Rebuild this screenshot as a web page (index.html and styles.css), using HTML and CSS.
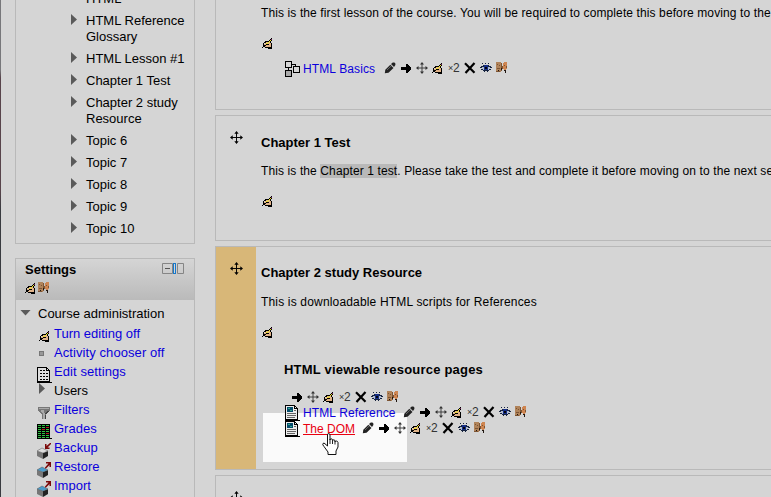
FILE: index.html
```html
<!DOCTYPE html>
<html lang="en">
<head>
<meta charset="utf-8">
<title>Course</title>
<link rel="stylesheet" href="styles.css">
</head>
<body>
<svg class="sprites" aria-hidden="true">
  <symbol id="hand" viewBox="0 0 11 11">
    <path fill="#e0b389" d="M3 4h5v1h1v4H3V8H2V6h1z"/>
    <path fill="#000" d="M9 0h1v1H9zM8 1h1v1H8zM7 2h1v1H7zM3 3h4v1H3zM2 4h2v1H2zM1 5h1v2H1zM1 7h3v1H1zM0 9h1v1H0zM1 8h2v1H1zM3 9h6v1H3zM6 10h4v1H6zM9 5h1v5H9zM8 4h1v1H8zM9 2h1v1H9zM8 3h1v1H8zM4 6h3v1H4z"/>
    <path fill="#eee32a" d="M8 2h1v1H8zM7 3h1v1H7zM6 4h1v1H6zM5 5h1v1H5zM4 5h1v1H4z"/>
    <path fill="#78285f" d="M9 1h1v1H9z"/>
  </symbol>
  <symbol id="mask" viewBox="0 0 12 12">
    <path fill="#b0835a" d="M0 0h5v10H0z"/><path fill="#ce8551" d="M8 0h3v1H8zM7 1h4v6H7zM8 7h2v1H8z"/>
    <path fill="#7c5433" d="M5 1h1v8H5zM0 9h4v1H0zM1 2h1v1H1zM3 3h1v1H3zM1 6h3v1H1zM6 4h1v3H6zM8 3h1v1H8zM10 4h1v2H10z"/>
    <path fill="#201610" d="M2 8h1v1H2zM5 6h1v2H5zM8 8h2v1H8zM9 9h1v2H9z"/>
  </symbol>
  <symbol id="pencil" viewBox="0 0 12 12">
    <path fill="#222" d="M.800 11.200L1.300 7.700 6.300 2.700l3.200 3.200-5 4.800z"/><path fill="#222" d="M7 2l1.800-1.500h1.600l1 1v1.600L10 5z"/><path stroke="#888" stroke-width=".7" d="M3 8l4.500-4.300"/>
  </symbol>
  <symbol id="arrow" viewBox="0 0 12 12"><path d="M1 5h5V2h1l4 4v1l-4 4H6V8H1z"/></symbol>
  <symbol id="move" viewBox="0 0 12 12">
    <path fill="none" stroke="currentColor" stroke-width=".9" d="M6 1v10M1 6h10"/>
    <path fill="currentColor" d="M6 0l2 2.500H4zM6 12l2-2.500H4zM0 6l2.500-2v4zM12 6L9.500 4v4z"/>
  </symbol>
  <symbol id="cross" viewBox="0 0 12 12"><path fill="none" stroke="#000" stroke-width="2.200" d="M1 1.200l9.500 9.600M10.500 1L1.500 11"/></symbol>
  <symbol id="eye" viewBox="0 0 12 12">
    <path fill="#aebbd2" d="M2 5h8v3H2z"/>
    <path fill="#16233f" d="M3 3h6v1H3zM1 4h3v1H1zM8 4h3v1H8zM0 5h2v1H0zM10 5h2v1h-2zM1 7h2v1H1zM9 7h2v1H9zM3 8h6v1H3zM2 1h1v1H2zM5 1h1v1H5zM8 1h1v1H8zM4 9h1v1H4zM7 9h1v1H7z"/>
    <path fill="#152d85" d="M4 3h4v5H4z"/><path fill="#03050e" d="M5 5h2v2H5z"/>
  </symbol>
  <symbol id="page" viewBox="0 0 15 16">
    <path fill="#eee" stroke="#000" d="M.5.500h9l3 3v11H.500z"/><path fill="none" stroke="#000" d="M9.500 0v3.500H13M0 15h15"/>
    <path fill="#064c6c" d="M2 2h6v5H2z"/><path fill="#35a98d" d="M3 3h2v1H3zM5 5h2v1H5z"/>
    <path fill="#666" d="M9 5h2v1H9zM2 8h9v1H2zM2 10h9v1H2zM2 12h8v1H2z"/>
  </symbol>
  <symbol id="lesson" viewBox="0 0 15 16">
    <path fill="none" stroke="#000" d="M.5.500h6v6h-6zM8.500 5.500h6v6h-6zM3.500 6v4M6 3.500h4.500V6"/><path fill="#aaa" stroke="#000" d="M.5 9.500h6v6h-6z"/>
  </symbol>
  <symbol id="doc" viewBox="0 0 15 16">
    <path fill="#ddd" stroke="#000" d="M.5.500h9l3 3v11H.500z"/><path fill="none" stroke="#000" d="M9.500 0v3.500H13M0 15.500h15"/>
    <path fill="#000" d="M3 3h2v1H3zM6 3h2v1H6zM3 6h2v1H3zM6 6h2v1H6zM9 6h2v1H9zM3 9h2v1H3zM6 9h2v1H6zM9 9h2v1H9zM3 12h2v1H3zM6 12h2v1H6zM9 12h2v1H9z"/>
  </symbol>
  <symbol id="filter" viewBox="0 0 15 16">
    <path fill="#777" d="M1 2h12v3l-4 5v4H5v-4L1 5z"/><path fill="#aaa" d="M2 3h10v1H2zM4 5h3v3H5zM6 8h2v6H6z"/><path fill="#444" d="M10 6h2L9 9H8zM8 10h1v4H8z"/>
  </symbol>
  <symbol id="grades" viewBox="0 0 15 16">
    <path d="M0 0h13v14h2v1H0z"/>
    <path fill="#2fc142" d="M1 1h11v13H1z"/>
    <path fill="#b32020" d="M9 3h3v2H9zM5 5h3v2H5zM9 9h3v2H9z"/>
    <path d="M1 2h11v1H1zM1 4h11v1H1zM1 6h11v1H1zM1 8h11v1H1zM1 10h11v1H1zM1 12h11v1H1zM4 1h1v13H4zM8 1h1v13H8z"/>
  </symbol>
  <symbol id="box" viewBox="0 0 15 16">
    <path fill="#777" d="M0 8l6 2v6l-6-3z"/><path fill="#222" d="M6 10l5-2v5l-5 3z"/><path fill="currentColor" stroke="#555" stroke-width=".5" d="M0 8l5-3 6 3-5 2z"/>
  </symbol>
  <symbol id="in" viewBox="0 0 15 16"><path fill="#7b0909" d="M8 1h1.500v2L13 0h1v1l-3.500 3.500h2V6H8z"/></symbol>
  <symbol id="out" viewBox="0 0 15 16"><path fill="#7b0909" d="M9 0h5v5h-1.500V3L9 6.500H8v-1l3.500-4H9z"/></symbol>
</svg>

<div class="edge"></div>
<aside class="sidebar">
  <nav class="block nav">
    <div class="topic">HTML</div>
    <div class="topic branch">HTML Reference<br>Glossary</div>
    <div class="topic branch">HTML Lesson #1</div>
    <div class="topic branch">Chapter 1 Test</div>
    <div class="topic branch">Chapter 2 study<br>Resource</div>
    <div class="topic branch">Topic 6</div>
    <div class="topic branch">Topic 7</div>
    <div class="topic branch">Topic 8</div>
    <div class="topic branch">Topic 9</div>
    <div class="topic branch">Topic 10</div>
  </nav>
  <section class="block settings">
    <header class="settings-head">
      <div class="title-row"><h2>Settings</h2><svg class="dock" viewBox="0 0 22 11"><path fill="none" stroke="#858585" d="M.5.500h10v10H.500zM15.500.500h6v10h-6z"/><path stroke="#555" d="M3 5.500h5"/><path fill="#1678cb" d="M11 0h3v11h-3z"/><path fill="#d5d5d5" d="M12 1h1v9h-1z"/></svg></div>
      <div class="head-icons"><svg class="hand"><use href="#hand"/></svg><svg class="tool"><use href="#mask"/></svg></div>
    </header>
    <div class="admin">Course administration</div>
    <ul class="menu">
      <li><span class="slot"><svg class="hand"><use href="#hand"/></svg></span><a>Turn editing off</a></li>
      <li><span class="slot"><i class="square"></i></span><a class="wide">Activity chooser off</a></li>
      <li><span class="slot"><svg class="big"><use href="#doc"/></svg></span><a class="wide">Edit settings</a></li>
      <li><span class="slot"><i class="triangle"></i></span>Users</li>
      <li><span class="slot"><svg class="big"><use href="#filter"/></svg></span><a>Filters</a></li>
      <li><span class="slot"><svg class="big soft"><use href="#grades"/></svg></span><a>Grades</a></li>
      <li><span class="slot"><svg class="big soft empty"><use href="#box"/><use href="#in"/></svg></span><a class="wide">Backup</a></li>
      <li><span class="slot"><svg class="big soft full"><use href="#box"/><use href="#out"/></svg></span><a>Restore</a></li>
      <li><span class="slot"><svg class="big soft full"><use href="#box"/><use href="#out"/></svg></span><a>Import</a></li>
    </ul>
  </section>
</aside>

<main class="content">
  <section class="week first">
    <div class="body">
      <p class="intro">This is the first lesson of the course. You will be required to complete this before moving to the</p>
      <svg class="hand edit"><use href="#hand"/></svg>
      <div class="resource basics"><svg class="big"><use href="#lesson"/></svg><a class="w-basics">HTML Basics</a>
        <span class="tools"><svg class="tool soft"><use href="#pencil"/></svg><svg class="tool"><use href="#arrow"/></svg><svg class="tool smooth"><use href="#move"/></svg><svg class="hand"><use href="#hand"/></svg><span class="twice"><small>×</small>2</span><svg class="tool smooth"><use href="#cross"/></svg><svg class="tool"><use href="#eye"/></svg><svg class="tool"><use href="#mask"/></svg></span>
      </div>
    </div>
  </section>
  <section class="week second">
    <div class="side"><svg class="mover"><use href="#move"/></svg></div>
    <div class="body">
      <h3>Chapter 1 Test</h3>
      <p class="test">This is the <mark>Chapter 1 test</mark>. Please take the test and complete it before moving on to the next se</p>
      <svg class="hand edit"><use href="#hand"/></svg>
    </div>
  </section>
  <section class="week third">
    <div class="side current"><svg class="mover"><use href="#move"/></svg></div>
    <div class="body">
      <h3>Chapter 2 study Resource</h3>
      <p class="scripts">This is downloadable HTML scripts for References</p>
      <svg class="hand edit"><use href="#hand"/></svg>
      <h4>HTML viewable resource pages</h4>
      <div class="resource label-tools">
        <span class="tools"><svg class="tool"><use href="#arrow"/></svg><svg class="tool smooth"><use href="#move"/></svg><svg class="hand"><use href="#hand"/></svg><span class="twice"><small>×</small>2</span><svg class="tool smooth"><use href="#cross"/></svg><svg class="tool"><use href="#eye"/></svg><svg class="tool"><use href="#mask"/></svg></span>
      </div>
      <div class="resource"><svg class="big"><use href="#page"/></svg><a class="w-reference">HTML Reference</a>
        <span class="tools"><svg class="tool soft"><use href="#pencil"/></svg><svg class="tool"><use href="#arrow"/></svg><svg class="tool smooth"><use href="#move"/></svg><svg class="hand"><use href="#hand"/></svg><span class="twice"><small>×</small>2</span><svg class="tool smooth"><use href="#cross"/></svg><svg class="tool"><use href="#eye"/></svg><svg class="tool"><use href="#mask"/></svg></span>
      </div>
      <div class="resource"><svg class="big"><use href="#page"/></svg><a class="w-dom active">The DOM</a>
        <span class="tools"><svg class="tool soft"><use href="#pencil"/></svg><svg class="tool"><use href="#arrow"/></svg><svg class="tool smooth"><use href="#move"/></svg><svg class="hand"><use href="#hand"/></svg><span class="twice"><small>×</small>2</span><svg class="tool smooth"><use href="#cross"/></svg><svg class="tool"><use href="#eye"/></svg><svg class="tool"><use href="#mask"/></svg></span>
      </div>
      <div class="spotlight"></div>
      <svg class="cursor" viewBox="0 0 17 22"><path fill="#fff" stroke="#111" d="M5.500 13V2q0-1.500 1.200-1.500T8 2v5q0-1.200 1.200-1.200T10.500 7v1q0-1.200 1.200-1.200T13 8v1q0-1 1.300-1t1.700 1.500V14l-2 4v3.500H6V19l-4-5.500q-2-2-1-3t2 .3z"/><path fill="none" stroke="#222" d="M8 6v5M10.500 7v4M13 8.500v3"/></svg>
    </div>
  </section>
  <section class="week last">
    <div class="side"><svg class="mover"><use href="#move"/></svg></div>
    <div class="body"></div>
  </section>
</main>
</body>
</html>
```
FILE: styles.css
```css
* { box-sizing: border-box; }
html { overflow: hidden; }
body {
  margin: 0;
  width: 771px;
  height: 497px;
  overflow: hidden;
  display: flex;
  background: #d5d5d5;
  color: #000;
  font: 13px/16px "Liberation Sans", Arial, sans-serif;
}
h2, h3, h4, p, ul { margin: 0; padding: 0; font-size: 13px; line-height: 16px; }
svg { display: block; flex: none; shape-rendering: crispEdges; }
a { color: #0b00dc; }
.sprites { position: absolute; width: 0; height: 0; }
.edge { width: 1px; flex: none; background: linear-gradient(#77777a 0 70px, #58444b 78px 190px, #393b40 210px); }

.sidebar { width: 180px; flex: none; margin-left: 14px; }
.block { border: 1px solid #b9b9b9; }
.nav { margin-top: -11px; padding: 1px 0 6px 70px; height: 255px; display: flex; flex-direction: column; gap: 6px; white-space: nowrap; }
.topic { flex: none; }
.branch::before {
  content: "";
  float: left;
  width: 6px;
  height: 11px;
  margin: 1px 0 0 -15px;
  background: #5a5a5a;
  clip-path: polygon(0 0, 100% 50%, 0 100%);
}
.settings { margin-top: 14px; height: 239px; border-bottom: 0; }
.settings-head { height: 41px; padding: 3px 10px 0 9px; background: linear-gradient(#d5d5d5, #bababa); }
.title-row { display: flex; justify-content: space-between; }
.dock { width: 22px; height: 11px; margin-top: 1px; }
.head-icons { display: flex; align-items: center; gap: 2px; margin-top: 4px; height: 12px; }
.hand { width: 11px; height: 11px; shape-rendering: auto; }
.head-icons .hand { margin-top: 1px; }
.tool { width: 12px; height: 12px; }
.big { width: 15px; height: 16px; }
.soft, .dock { shape-rendering: auto; }
.smooth { shape-rendering: auto; color: #333; }
.admin { display: flex; align-items: center; margin: 6px 0 0 22px; white-space: nowrap; }
.admin::before { content: ""; width: 11px; height: 6px; margin: -3px 7px 0 -18px; background: #5a5a5a; clip-path: polygon(0 0, 100% 0, 50% 100%); }
.menu { list-style: none; padding-left: 21px; margin-top: 2px; }
.menu li { height: 19px; line-height: 19px; display: flex; white-space: nowrap; }
.slot { width: 17px; height: 19px; flex: none; padding-top: 5px; }
.slot .hand { margin: 2px 0 0 2px; }
.square { display: block; width: 5px; height: 5px; margin: 3px 0 0 2px; border: 1px solid #777; background: #999; }
.triangle { display: block; width: 6px; height: 11px; margin: -3px 0 0 2px; background: #5a5a5a; clip-path: polygon(0 0, 100% 50%, 0 100%); }
.empty { color: #ddd; }
.full { color: #4a9dcd; }
.wide { letter-spacing: .08px; }

.content { width: 556px; height: 497px; overflow: hidden; margin-left: 20px; flex: none; display: flex; flex-direction: column; gap: 5px; }
.week { flex: none; display: flex; border: 1px solid #b9b9b9; border-right: 0; white-space: nowrap; overflow: hidden; }
.first { height: 110px; border-top: 0; }
.first .body { padding-left: 45px; }
.second { height: 126px; }
.third { height: 224px; }
.last { height: 22px; border-bottom: 0; }
.side { width: 40px; flex: none; padding: 15px 0 0 14px; }
.current { background: #d8b778; }
.mover { width: 13px; height: 13px; shape-rendering: auto; }
.body { position: relative; padding: 18px 0 0 5px; }
.body p { font-size: 12px; letter-spacing: .11px; }
.body .scripts { letter-spacing: .17px; }
.first .body { padding-top: 5px; }
h3 { height: 16px; }
.second h3 { padding-top: 1px; }
h3 + p { margin-top: 13px; }
.edit { margin: 17px 0 0 1px; }
mark { color: inherit; background: #b9b9b9; }
.resource { display: flex; align-items: center; height: 16px; margin-left: 24px; position: relative; z-index: 1; }
.resource a { margin-left: 3px; font-size: 12px; letter-spacing: .12px; }
.basics { margin-top: 12px; }
h4 { margin: 24px 0 0 23px; letter-spacing: .2px; }
.label-tools { margin: 13px 0 0 30px; height: 14px; }
.tools { display: flex; align-items: center; gap: 4px; margin-top: -2px; }
.tools .hand { margin-right: 1px; }
.twice { width: 12px; font-size: 12px; line-height: 12px; color: #333; display: flex; align-items: center; }
.twice small { font-size: 9px; width: 5px; }
.w-basics { width: 81px; }
.w-reference { width: 100px; }
.w-dom { width: 59px; }
.resource .active { color: #e9000f; text-decoration: underline; letter-spacing: 0; }
.spotlight { position: absolute; left: 7px; top: 166px; width: 144px; height: 49px; background: #fafafa; }
.cursor { position: absolute; z-index: 2; left: 66px; top: 186px; width: 17px; height: 22px; shape-rendering: auto; }
```
